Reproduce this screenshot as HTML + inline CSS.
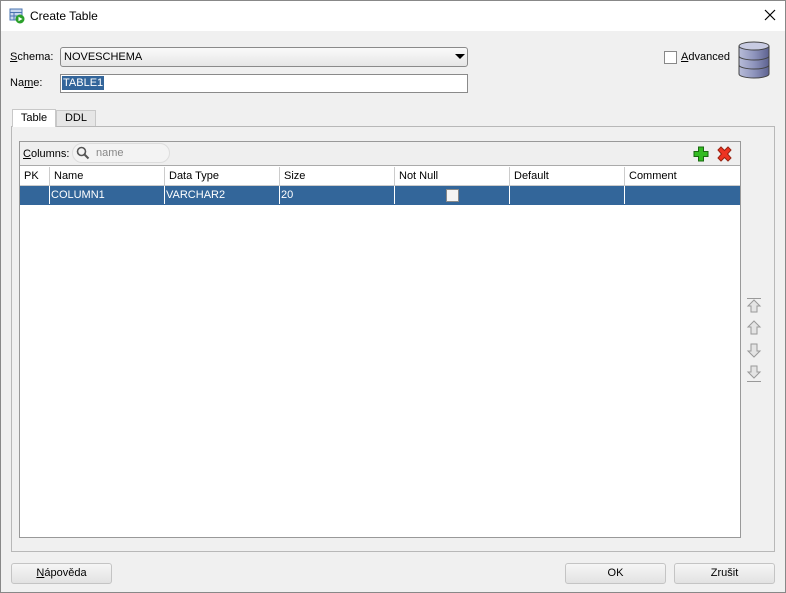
<!DOCTYPE html>
<html><head><meta charset="utf-8"><style>
*{box-sizing:border-box;margin:0;padding:0}
body{width:786px;height:593px;overflow:hidden;background:#f0f0f0;font-family:"Liberation Sans",sans-serif;font-size:11px;color:#000;position:relative}
.abs{position:absolute}
u{text-decoration:underline}
.btn{position:absolute;height:21px;border:1px solid #c4c4c4;border-radius:3px;background:linear-gradient(#f6f6f6,#e2e2e2);text-align:center;line-height:19px;font-size:11px}
.th{position:absolute;top:0;height:18px;line-height:18px;padding-left:4px;border-right:1px solid #ccc}
.td{position:absolute;top:0;height:18px;line-height:18px;padding-left:1px;border-right:1px solid #fff;color:#fff}
</style></head><body>
<div class="abs" style="left:0;top:0;width:786px;height:31px;background:#fff"></div>
<svg class="abs" style="left:9px;top:8px" width="16" height="16" viewBox="0 0 16 16">
<rect x="1" y="1" width="12" height="11" fill="#c8d8ee" stroke="#4a74b0"/><line x1="1" y1="4.5" x2="13" y2="4.5" stroke="#4a74b0"/><line x1="1" y1="8" x2="13" y2="8" stroke="#4a74b0"/><line x1="5" y1="4" x2="5" y2="12" stroke="#4a74b0"/>
<circle cx="11" cy="11" r="4.5" fill="#2aa02a"/><path d="M9.5 8.8 L13.5 11 L9.5 13.2Z" fill="#fff"/></svg>
<div class="abs" style="left:30px;top:9px;font-size:12px">Create Table</div>
<svg class="abs" style="left:764px;top:9px" width="12" height="12" viewBox="0 0 12 12"><path d="M1 1L11 11M11 1L1 11" stroke="#000" stroke-width="1.2"/></svg>

<div class="abs" style="left:10px;top:51px"><u>S</u>chema:</div>
<div class="abs" style="left:60px;top:47px;width:408px;height:20px;border:1px solid #8a8a8a;border-radius:3px;background:linear-gradient(#fafafa,#e6e6e6);padding-left:3px;line-height:18px">NOVESCHEMA</div>
<div class="abs" style="left:455px;top:54px;width:0;height:0;border-left:5px solid transparent;border-right:5px solid transparent;border-top:5px solid #000"></div>
<div class="abs" style="left:10px;top:77px">Na<u>m</u>e:</div>
<div class="abs" style="left:60px;top:74px;width:408px;height:19px;border:1px solid #8a8a8a;background:#fff"></div>
<div class="abs" style="left:62px;top:76px;height:14px;background:#33659a;color:#fff;line-height:14px;padding:0 1px">TABLE1</div>

<div class="abs" style="left:664px;top:51px;width:13px;height:13px;border:1px solid #888;background:#fff"></div>
<div class="abs" style="left:681px;top:51px;font-size:11px"><u>A</u>dvanced</div>
<svg class="abs" style="left:737px;top:41px" width="34" height="40" viewBox="0 0 34 40">
<defs><linearGradient id="g" x1="0" x2="1"><stop offset="0" stop-color="#b8bcd8"/><stop offset=".5" stop-color="#8f95bd"/><stop offset="1" stop-color="#5d6290"/></linearGradient></defs>
<path d="M2 5 V33 A15 4 0 0 0 32 33 V5" fill="url(#g)" stroke="#444"/><ellipse cx="17" cy="5" rx="15" ry="4" fill="#c8cbe2" stroke="#444"/>
<path d="M2 15 A15 4 0 0 0 32 15 M2 24 A15 4 0 0 0 32 24" fill="none" stroke="#444"/></svg>

<div class="abs" style="left:11px;top:126px;width:764px;height:426px;border:1px solid #b8b8b8"></div>
<div class="abs" style="left:12px;top:109px;width:44px;height:18px;background:#fff;border:1px solid #c8c8c8;border-bottom:none;text-align:center;line-height:17px">Table</div>
<div class="abs" style="left:56px;top:110px;width:40px;height:16px;background:#e6e6e6;border:1px solid #c8c8c8;border-bottom:none;text-align:center;line-height:15px">DDL</div>

<div class="abs" style="left:19px;top:141px;width:722px;height:397px;border:1px solid #999;background:#fff"></div>
<div class="abs" style="left:20px;top:142px;width:720px;height:24px;background:#efefef;border-bottom:1px solid #aaa"></div>
<div class="abs" style="left:23px;top:148px"><u>C</u>olumns:</div>
<div class="abs" style="left:72px;top:143px;width:98px;height:20px;border:1px solid #ddd;border-radius:10px;background:#f3f3f3"></div>
<svg class="abs" style="left:76px;top:146px" width="14" height="14" viewBox="0 0 14 14"><circle cx="5.5" cy="5.5" r="4" fill="none" stroke="#555" stroke-width="1.6"/><line x1="8.5" y1="8.5" x2="12.5" y2="12.5" stroke="#555" stroke-width="2"/></svg>
<div class="abs" style="left:96px;top:147px;color:#888">name</div>
<svg class="abs" style="left:693px;top:146px" width="16" height="16" viewBox="0 0 16 16"><path d="M5.5 1h5v4.5h4.5v5h-4.5v4.5h-5v-4.5h-4.5v-5h4.5z" fill="#33bb22" stroke="#1a6a10"/></svg>
<svg class="abs" style="left:716px;top:146px" width="17" height="16" viewBox="0 0 17 16"><path d="M2 4L5 1L8.5 4.5L12 1L15 4L11.5 8L15 12L12 15L8.5 11.5L5 15L2 12L5.5 8Z" fill="#ee3322" stroke="#992211"/></svg>

<div class="abs" style="left:20px;top:167px;width:720px;height:19px;background:#fff;border-bottom:1px solid #ccc">
<div class="th" style="left:0;width:30px">PK</div>
<div class="th" style="left:30px;width:115px">Name</div>
<div class="th" style="left:145px;width:115px">Data Type</div>
<div class="th" style="left:260px;width:115px">Size</div>
<div class="th" style="left:375px;width:115px">Not Null</div>
<div class="th" style="left:490px;width:115px">Default</div>
<div class="th" style="left:605px;width:115px;border:none">Comment</div>
</div>
<div class="abs" style="left:20px;top:186px;width:720px;height:19px;background:#33669a">
<div class="td" style="left:0;width:30px"></div>
<div class="td" style="left:30px;width:115px">COLUMN1</div>
<div class="td" style="left:145px;width:115px">VARCHAR2</div>
<div class="td" style="left:260px;width:115px">20</div>
<div class="td" style="left:375px;width:115px"></div>
<div class="td" style="left:490px;width:115px"></div>
<div class="td" style="left:605px;width:115px;border:none"></div>
</div>
<div class="abs" style="left:446px;top:189px;width:13px;height:13px;background:#f4f4f4;border:1px solid #888"></div>

<svg class="abs" style="left:745px;top:296px" width="18" height="90" viewBox="0 0 18 90">
<g fill="#e4e4e4" stroke="#999">
<line x1="2" y1="2.5" x2="16" y2="2.5"/><path d="M9 4L15 10H12V16H6V10H3Z"/>
<path d="M9 25L15 31H12V38H6V31H3Z"/>
<path d="M6 48H12V55H15L9 61L3 55H6Z"/>
<path d="M6 70H12V76H15L9 82L3 76H6Z"/><line x1="2" y1="85.5" x2="16" y2="85.5"/>
</g></svg>

<div class="btn" style="left:11px;top:563px;width:101px"><u>N</u>ápověda</div>
<div class="btn" style="left:565px;top:563px;width:101px">OK</div>
<div class="btn" style="left:674px;top:563px;width:101px">Zrušit</div>
<div class="abs" style="left:0;top:0;width:786px;height:593px;border:1px solid #888;pointer-events:none"></div>
</body></html>
